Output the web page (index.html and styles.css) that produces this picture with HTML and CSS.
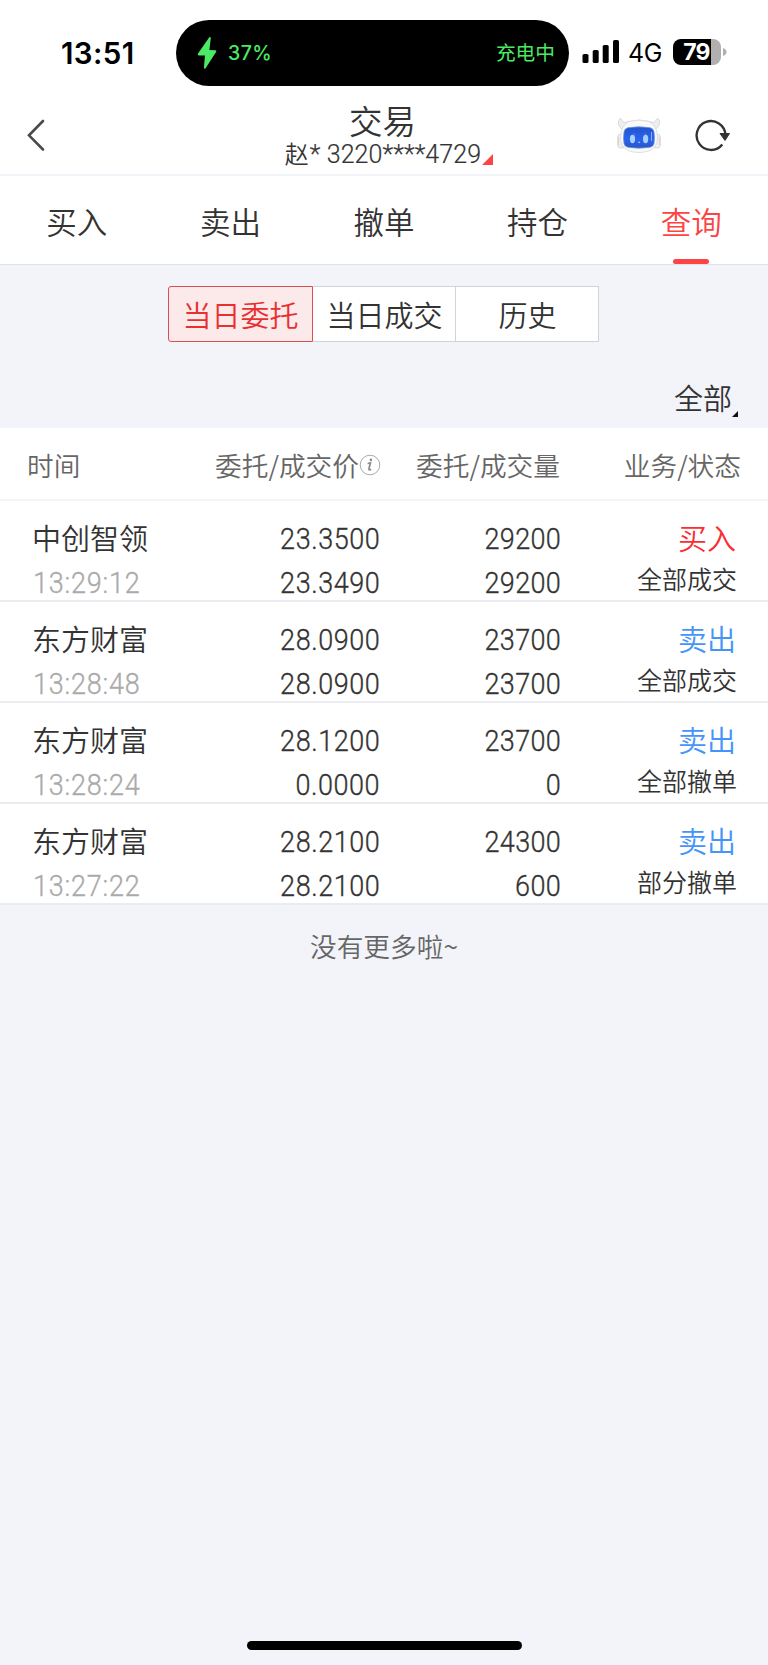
FILE: index.html
```html
<!DOCTYPE html>
<html lang="zh-CN">
<head>
<meta charset="utf-8">
<title>交易</title>
<link rel="stylesheet" href="styles.css">
</head>
<body>
<div class="status">
  <div class="clock">13:51</div>
  <div class="island">
    <svg class="bolt" width="20" height="34" viewBox="0 0 20 34"><path d="M12.3 1.3 L1 17.6 Q0.3 19.3 1.6 19.4 L8 19.5 L6.900 31.800 Q7.200 33.300 8.600 32.300 L19.200 15.800 Q19.700 14.300 18.400 14.200 L12.400 14.100 L13.800 2 Q13.500 0.400 12.300 1.300Z" fill="#4be964"/></svg>
    <span class="charge">37%</span>
    <span class="charging">充电中</span>
  </div>
  <svg class="signal" width="38" height="24" viewBox="0 0 38 24"><rect x=".5" y="14" width="6" height="9" rx="1.6"/><rect x="10.700" y="10" width="6" height="13" rx="1.600"/><rect x="20.700" y="5" width="6" height="18" rx="1.600"/><rect x="31" y="0" width="6" height="23" rx="1.600"/></svg>
  <span class="net">4G</span>
  <div class="battery"><span>79</span></div>
  <svg class="knob" width="4" height="8" viewBox="0 0 4 8"><path d="M0 0Q3.600 1.500 3.600 4Q3.600 6.500 0 8Z" fill="#b0b0b0"/></svg>
</div>
<header class="nav">
  <svg class="back" width="20" height="34" viewBox="0 0 20 34"><path d="M17 3 3 17.300 17 31.500" fill="none" stroke="#4a4a4a" stroke-width="2.600" stroke-linecap="round"/></svg>
  <div class="heading">
    <h1>交易</h1>
    <div class="account"><span class="acct-text">赵<span class="acct-num">* 3220****4729</span></span><svg width="11" height="11" viewBox="0 0 11 11"><path d="M11 0V11H0Z" fill="#fc4445"/></svg></div>
  </div>
  <svg class="robot" width="44" height="36" viewBox="0 0 44 36">
    <defs><linearGradient id="face" x1="0" y1="0" x2="0" y2="1"><stop offset="0" stop-color="#2154cf"/><stop offset=".6" stop-color="#2864ee"/><stop offset="1" stop-color="#2a55c4"/></linearGradient></defs>
    <path d="M7 12C1 9 .4 5 2.600 1C3.500 0 4.600 .6 5 2C6 4.500 8 5 11 3.500Q22 .5 33 3.500C36 5 38 4.500 39 2C39.500 .5 40.600 0 41.500 1C43.800 5 42.500 9 37 12Z" fill="#eceef1" stroke="#cfd1d5" stroke-width=".8"/>
    <rect x=".7" y="16" width="8" height="14" rx="3" fill="#f3eeef" stroke="#d0d0d4" stroke-width=".8"/>
    <rect x="35.300" y="16" width="8" height="14" rx="3" fill="#f3eeef" stroke="#d0d0d4" stroke-width=".8"/>
    <path d="M1.600 19v8M42.400 19v8" stroke="#e8cccf"/>
    <path d="M12 3.500Q22 1 32 3.500Q40.500 8 40.500 19Q40.500 29 33 32.500Q22 36.500 11 32.500Q3.500 29 3.500 19Q3.500 8 12 3.500Z" fill="#f8f9fb" stroke="#d8d9dd" stroke-width=".8"/>
    <path d="M11 9.700Q22 8 33 9.700Q36.500 10.500 37 14Q38 20 37 25.500Q36.300 28.700 33 29.300Q22 31 11 29.300Q7.700 28.700 7 25.500Q6 20 7 14Q7.500 10.500 11 9.700Z" fill="url(#face)" stroke="#7293de" stroke-width=".8"/>
    <ellipse cx="15.500" cy="21" rx="2.600" ry="4.200" fill="#a8cdff"/><ellipse cx="28.600" cy="21" rx="2.600" ry="4.200" fill="#a8cdff"/>
    <path d="M17 15.500l1 1M28 15.500l1 1M21.400 24h1.400l-.7 1z" stroke="#a8cdff" stroke-width=".7" fill="#a8cdff"/>
    <path d="M34.500 14v9" stroke="#8eaaf0"/>
  </svg>
  <svg class="reload" width="36" height="34" viewBox="0 0 36 34"><path d="M27.300 26.500A14.400 14.400 0 1 1 30.400 16.500" fill="none" stroke="#333" stroke-width="2.400"/><path d="M25 15.500H34.500L30 22.500Z" fill="#333" stroke="#333" stroke-linejoin="round"/></svg>
</header>
<nav class="tabs">
  <div class="tab">买入</div><div class="tab">卖出</div><div class="tab">撤单</div><div class="tab">持仓</div><div class="tab active">查询</div>
</nav>
<section class="filters">
  <div class="segments"><div class="seg on">当日委托</div><div class="seg">当日成交</div><div class="seg">历史</div></div>
  <div class="scope"><span>全部</span><svg width="6" height="6" viewBox="0 0 6 6"><path d="M6 0V6H0Z" fill="#111"/></svg></div>
</section>
<main class="orders">
  <div class="head">
    <div class="h-time">时间</div>
    <div class="h-price">委托/成交价<svg width="22" height="22" viewBox="0 0 22 22"><circle cx="11" cy="11" r="9.800" fill="none" stroke="#aaa" stroke-width="1"/><path d="M8.600 9.500L11.400 8.800L9.900 15Q9.800 16.600 12.200 15.200" fill="none" stroke="#8c8c8c" stroke-width="1.700"/><circle cx="11.900" cy="5.900" r="1.300" fill="#8c8c8c"/></svg></div>
    <div class="h-vol">委托/成交量</div>
    <div class="h-state">业务/状态</div>
  </div>
  <div class="row">
    <div class="who"><b>中创智领</b><i>13:29:12</i></div>
    <div class="num price"><span>23.3500</span><span>23.3490</span></div>
    <div class="num"><span>29200</span><span>29200</span></div>
    <div class="state"><b class="buy">买入</b><em>全部成交</em></div>
  </div>
  <div class="row">
    <div class="who"><b>东方财富</b><i>13:28:48</i></div>
    <div class="num price"><span>28.0900</span><span>28.0900</span></div>
    <div class="num"><span>23700</span><span>23700</span></div>
    <div class="state"><b class="sell">卖出</b><em>全部成交</em></div>
  </div>
  <div class="row">
    <div class="who"><b>东方财富</b><i>13:28:24</i></div>
    <div class="num price"><span>28.1200</span><span>0.0000</span></div>
    <div class="num"><span>23700</span><span>0</span></div>
    <div class="state"><b class="sell">卖出</b><em>全部撤单</em></div>
  </div>
  <div class="row">
    <div class="who"><b>东方财富</b><i>13:27:22</i></div>
    <div class="num price"><span>28.2100</span><span>28.2100</span></div>
    <div class="num"><span>24300</span><span>600</span></div>
    <div class="state"><b class="sell">卖出</b><em>部分撤单</em></div>
  </div>
</main>
<div class="end">没有更多啦~</div>
<div class="home"></div>
</body>
</html>
```
FILE: styles.css
```css
* { box-sizing: border-box; }
body {
  margin: 0;
  width: 768px;
  height: 1665px;
  display: flex;
  flex-direction: column;
  background: #f3f4f9;
  color: #333;
  font-family: "Noto Sans CJK SC", sans-serif;
  font-weight: 350;
  white-space: nowrap;
  overflow: hidden;
}
svg { display: block; flex: none; }
b, i, em { font-style: normal; font-weight: inherit; }

.status { height: 104px; padding-top: 20px; background: #fff; display: flex; align-items: flex-start; color: #000; font-family: Inter, "Noto Sans CJK SC", sans-serif; }
.clock { width: 176px; padding-left: 61px; font-size: 29.5px; font-weight: 600; line-height: 66px; letter-spacing: .4px; }
.island { width: 393px; height: 66px; border-radius: 33px; background: #000; color: #4be964; display: flex; align-items: center; padding: 0 14px 0 21px; }
.charge { margin-left: 11px; font-size: 19.5px; font-weight: 500; letter-spacing: .4px; }
.charging { margin: -3px 0 0 auto; font-size: 19.7px; font-weight: 400; }
.signal { margin: 20px 0 0 13px; }
.net { margin-left: 8px; width: 45px; font-size: 25px; font-weight: 400; line-height: 67px; letter-spacing: -.4px; }
.battery { margin-top: 19px; width: 48px; height: 26px; border-radius: 8px; background: linear-gradient(90deg, #000 38px, #b0b0b0 38px); color: #fff; font-size: 23px; font-weight: 700; line-height: 26px; text-align: center; letter-spacing: -.8px; text-indent: -1px; }
.knob { margin: 28px 0 0 2px; }

.nav { height: 72px; background: #fff; border-bottom: 2px solid #f3f4f9; display: flex; align-items: flex-start; }
.back { margin: 14px 0 0 26px; }
.heading { width: 337px; margin-left: 168px; display: flex; flex-direction: column; align-items: center; }
h1 { margin: -2px 0 0; font-size: 33.5px; font-weight: inherit; line-height: 36px; }
.account { height: 32px; margin-left: 13px; display: flex; align-items: flex-start; }
.acct-text { font-size: 24px; line-height: 30px; }
.acct-num { display: inline-block; margin-left: 1px; font-family: Roboto, sans-serif; font-size: 25px; letter-spacing: .1px; -webkit-text-stroke: .2px; }
.account svg { margin: 16px 0 0 1px; }
.robot { margin: 14px 0 0 66px; }
.reload { margin: 14px 0 0 34px; }

.tabs { height: 89px; background: #fff; border-bottom: 1px solid #e0e1e6; display: flex; }
.tab { flex: 1; display: flex; flex-direction: column; align-items: center; font-size: 30.5px; line-height: 90px; }
.active { color: #fc4445; }
.active::after { content: ""; width: 36px; height: 5px; margin-top: -7px; border-radius: 2.5px; background: #fc4445; }

.filters { height: 163px; padding: 21px 0 0 168px; }
.segments { width: 431px; height: 56px; display: flex; }
.seg { width: 143px; background: #fff; border: 1px solid #d2d3d7; border-left: 0; font-size: 29px; line-height: 55px; text-align: center; text-indent: 1px; }
.seg.on { width: 145px; background: #fce9ea; border: 1px solid #dd4c50; border-radius: 3px 0 0 3px; color: #e93030; text-indent: 0; }
.scope { display: flex; align-items: flex-start; margin: 34px 30px 0 0; justify-content: flex-end; font-size: 29px; line-height: 42px; }
.scope svg { margin: 35px 0 0; }

.orders { background: #fff; }
.head { height: 73px; border-bottom: 2px solid #f5f5f8; display: grid; grid-template-columns: 160px 221px 179px 181px; color: #666; font-size: 26.7px; line-height: 74px; }
.h-time { padding-left: 27px; }
.h-price { display: flex; justify-content: flex-end; }
.h-price svg { margin-top: 26px; }
.h-vol, .h-state { text-align: right; }
.row { height: 101px; border-bottom: 2px solid #ebecf2; display: grid; grid-template-columns: 160px 220px 181px 176px; padding-top: 15px; }
.row > div { display: flex; flex-direction: column; align-items: flex-end; }
.row > .who { align-items: flex-start; padding-left: 32px; }
.who b, .state b { font-size: 29px; line-height: 42px; height: 44px; }
.who i, .num span { font-family: Roboto, sans-serif; font-size: 30px; line-height: 45px; height: 44px; transform: scaleX(.9); transform-origin: right; -webkit-text-stroke: .35px; }
.num span { letter-spacing: .4px; }
.price span { letter-spacing: .6px; }
.who i { padding-left: 1px; color: #aaa; letter-spacing: .9px; transform-origin: left; }
.state b { margin-right: 1px; }
.state em { font-size: 25px; line-height: 36px; }
.buy { color: #fc2c2f; }
.sell { color: #4594fa; }
.end { padding-top: 22px; color: #666; font-size: 26.7px; line-height: 38px; text-align: center; }
.home { width: 275px; height: 9px; margin: auto auto 15px; border-radius: 5px; background: #000; }
```
